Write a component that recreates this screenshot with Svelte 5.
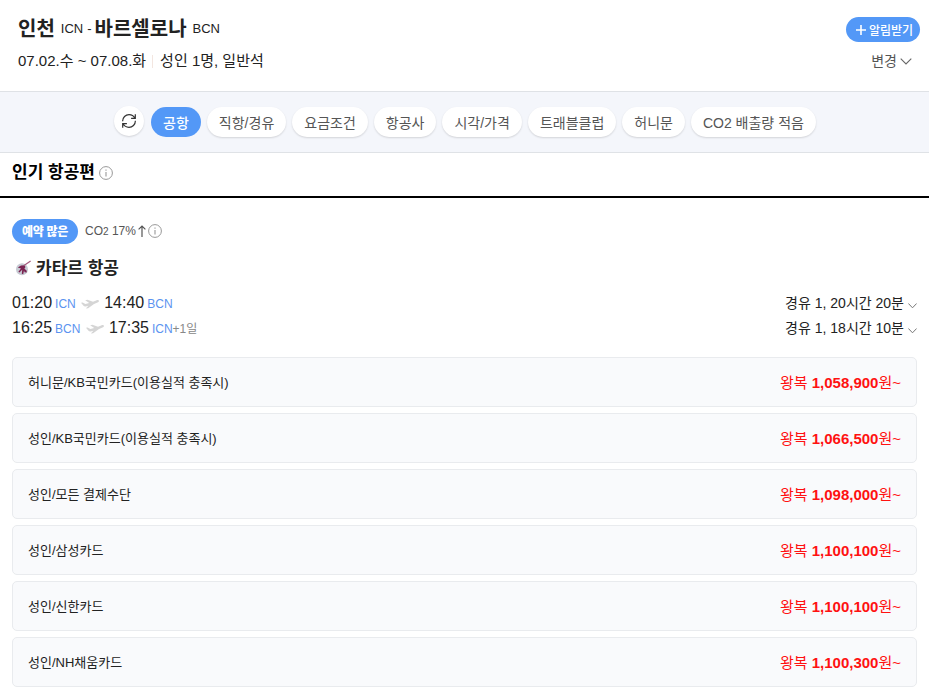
<script>
  const filters = ['공항', '직항/경유', '요금조건', '항공사', '시각/가격', '트래블클럽', '허니문', 'CO2 배출량 적음'];
  let active = $state('공항');
  const legs = [
    { dep: '01:20', from: 'ICN', arr: '14:40', to: 'BCN', plus: '', info: '경유 1, 20시간 20분' },
    { dep: '16:25', from: 'BCN', arr: '17:35', to: 'ICN', plus: '+1일', info: '경유 1, 18시간 10분' }
  ];
  const fares = [
    ['허니문/KB국민카드(이용실적 충족시)', '1,058,900'],
    ['성인/KB국민카드(이용실적 충족시)', '1,066,500'],
    ['성인/모든 결제수단', '1,098,000'],
    ['성인/삼성카드', '1,100,100'],
    ['성인/신한카드', '1,100,100'],
    ['성인/NH채움카드', '1,100,300']
  ];
</script>

{#snippet info()}
  <svg class="info" width="14" height="14" viewBox="0 0 14 14" fill="none" stroke="#999">
    <circle cx="7" cy="7" r="6.4" />
    <path d="M7 6v4.5M7 3.5v1.2" stroke-width="1.1" />
  </svg>
{/snippet}

<div class="page">
  <header>
    <div>
      <h1><b>인천</b><span class="code">ICN</span><span class="dash">-</span><b>바르셀로나</b><span class="code">BCN</span></h1>
      <p class="trip"><span>07.02.수 ~ 07.08.화</span><i></i><span>성인 1명, 일반석</span></p>
    </div>
    <div class="actions">
      <button class="alarm">
        <svg width="10" height="10" viewBox="0 0 10 10"><path d="M5 0v10M0 5h10" stroke="#fff" stroke-width="1.6" /></svg><span>알림받기</span>
      </button>
      <button class="change">
        <span>변경</span><svg width="12" height="7" viewBox="0 0 12 7"><path d="M.7.7 6 6 11.3.7" fill="none" stroke="#666" stroke-width="1.1" /></svg>
      </button>
    </div>
  </header>

  <nav>
    <button class="refresh" aria-label="초기화">
      <svg width="16" height="16" viewBox="0 0 16 16" fill="none" stroke="#333" stroke-width="1.2">
        <path d="M1.6 8.2C1.6 4.4 4.6 1.7 8 1.7c2.6 0 4.8 1.4 5.9 3.5M14.3 1.2v4.2h-4.2M14.4 7.8c0 3.8-3 6.5-6.4 6.5-2.6 0-4.8-1.4-5.9-3.5M1.7 14.8v-4.2h4.2" />
      </svg>
    </button>
    {#each filters as f}
      <button class="chip" class:on={active === f} onclick={() => (active = f)}>{f}</button>
    {/each}
  </nav>

  <h2><span>인기 항공편</span>{@render info()}</h2>

  <main>
    <div class="tags">
      <span class="badge">예약 많은</span>
      <span class="co">CO<small>2</small> 17%</span>
      <svg class="up" width="8" height="12" viewBox="0 0 8 12"><path d="M4 12V1M.6 4.4 4 1l3.4 3.4" fill="none" stroke="#555" stroke-width="1.2" /></svg>
      {@render info()}
    </div>
    <h3>
      <svg width="16" height="16" viewBox="0 0 16 16">
        <circle cx="7" cy="9.3" r="6" fill="#c6cad3" />
        <path d="M2.8 7.4 6 5.6 9.5 5.2 10.5 7 9.4 8.8 11.6 10.4 11.8 12.6 9.6 12.2 9 10.4 8.2 14.2 6.8 13.8 7.2 9.8 4.4 12.4 3.4 11.8 6 8.4Z" fill="#7a2350" />
        <path d="M9 5.6 15.6 1" stroke="#a4597c" stroke-width="1.2" />
      </svg><span>카타르 항공</span>
    </h3>
    {#each legs as l}
      <div class="leg">
        <span class="time">{l.dep}</span><span class="port">{l.from}</span>
        <svg class="plane" width="18" height="10" viewBox="0 0 18 10"><path d="M0 3.8 1.6 3.5 4.4 4.9 8.2 4 4.2 1.2 6.4.7 12 2.7 15.2 1.4c1.2-.5 2.4-.4 2.7.2.3.7-.3 1.4-1.4 1.9L13 5 7.2 9.3 4.8 9.6 7.4 6.8 4.6 7.4Q3.4 7.6 2.5 6.8Z" fill="#d5d5d5" /></svg>
        <span class="time">{l.arr}</span><span class="port">{l.to}</span><span class="plus">{l.plus}</span>
        <span class="dur">{l.info}</span>
        <svg class="down" width="9" height="6" viewBox="0 0 9 6"><path d="M.4.5 4.5 4.8 8.6.5" fill="none" stroke="#777" /></svg>
      </div>
    {/each}
    <ul>
      {#each fares as [name, price]}
        <li><span>{name}</span><span class="price">왕복 <b>{price}</b>원~</span></li>
      {/each}
    </ul>
  </main>
</div>

<style>
  .page {
    height: 690px;
    overflow: hidden;
    background: #fff;
    color: #222;
    font-family: 'Liberation Sans', 'Noto Sans CJK KR', sans-serif;
  }
  h1, h2, h3, p, ul { margin: 0; padding: 0; font-weight: 400; }
  button { border: 0; padding: 0; margin: 0; font: inherit; background: none; color: inherit; }
  svg { flex: none; display: block; }
  header {
    box-sizing: border-box;
    height: 92px;
    padding: 16px 9px 0 18px;
    display: flex;
    justify-content: space-between;
    border-bottom: 1px solid #dfe2e6;
  }
  h1 { display: flex; align-items: flex-start; height: 24px; line-height: 25px; font-size: 20px; }
  h1 b { line-height: 27px; }
  .code { font-size: 13px; margin-left: 6px; }
  .dash { font-size: 13px; margin: 0 3px 0 4px; }
  .trip { display: flex; align-items: center; margin-top: 10px; line-height: 22px; font-size: 15px; }
  .trip i { width: 1px; height: 13px; background: #f3e6e0; margin: 0 7px 0 6px; }
  .actions { display: flex; flex-direction: column; align-items: flex-end; }
  .alarm {
    display: flex;
    align-items: center;
    gap: 3px;
    width: 74px;
    height: 25px;
    margin-top: 1px;
    padding-left: 10px;
    border-radius: 13px;
    background: #5398f7;
    color: #fff;
    font-size: 12px;
    font-weight: 500;
    white-space: nowrap;
  }
  .alarm span { padding-bottom: 1px; }
  .change { display: flex; align-items: center; gap: 3px; margin: 8px 8px 0 0; line-height: 22px; font-size: 14px; color: #555; }
  nav {
    box-sizing: border-box;
    height: 61px;
    padding: 15px 0 0 1px;
    display: flex;
    justify-content: center;
    gap: 6px;
    background: #f4f6fb;
    border-bottom: 1px solid #dfe2e6;
  }
  .refresh, .chip { height: 30px; border-radius: 15px; background: #fff; box-shadow: 0 1px 2px rgba(0, 0, 0, .14); }
  .refresh { display: flex; align-items: center; justify-content: center; width: 30px; margin: -1px 1px 0 0; }
  .chip { padding: 0 12px; font-size: 14px; line-height: 32px; color: #555; white-space: nowrap; }
  .on { background: #5398f7; color: #fff; font-weight: 500; box-shadow: none; }
  h2 {
    box-sizing: border-box;
    height: 45px;
    padding: 0 0 3px 12px;
    display: flex;
    align-items: center;
    gap: 4px;
    border-bottom: 2px solid #000;
    color: #000;
    font-size: 17px;
    font-weight: 700;
  }
  h2 span { padding-bottom: 5px; }
  main { padding: 21px 12px 0; }
  .tags { display: flex; align-items: center; height: 25px; margin-bottom: 11px; }
  .tags :global(.info) { margin-bottom: 2px; }
  .badge {
    width: 66px;
    height: 25px;
    line-height: 26px;
    border-radius: 13px;
    background: #5398f7;
    color: #fff;
    font-size: 12px;
    font-weight: 900;
    letter-spacing: -.3px;
    text-align: center;
  }
  .co { margin-left: 7px; padding-bottom: 2px; font-size: 12px; color: #555; }
  .co small { font-size: 10px; }
  .up { margin: 0 2px 2px; }
  h3 { display: flex; align-items: center; gap: 5px; height: 24px; margin: 0 0 11px 3px; font-size: 17px; font-weight: 600; }
  h3 svg { margin-top: 2px; }
  h3 span { padding-bottom: 1px; }
  .leg { display: flex; align-items: baseline; height: 25px; line-height: 25px; }
  .time { font-size: 16px; }
  .port { margin-left: 3px; font-size: 12px; color: #5b93f0; }
  .plane { margin: 0 5px 0 5.5px; transform: translateY(1px); }
  .plus { font-size: 12px; color: #888; }
  .dur { margin: 0 4px 0 auto; font-size: 14px; line-height: 26px; }
  .down { transform: translateY(1px); }
  ul { list-style: none; margin-top: 17px; }
  li {
    box-sizing: border-box;
    height: 50px;
    margin-bottom: 6px;
    padding: 0 15px 2px;
    display: flex;
    justify-content: space-between;
    align-items: center;
    border: 1px solid #e9ebee;
    border-radius: 5px;
    background: #f9fafc;
    font-size: 13px;
  }
  .price { font-size: 15px; color: #f11; }
</style>
